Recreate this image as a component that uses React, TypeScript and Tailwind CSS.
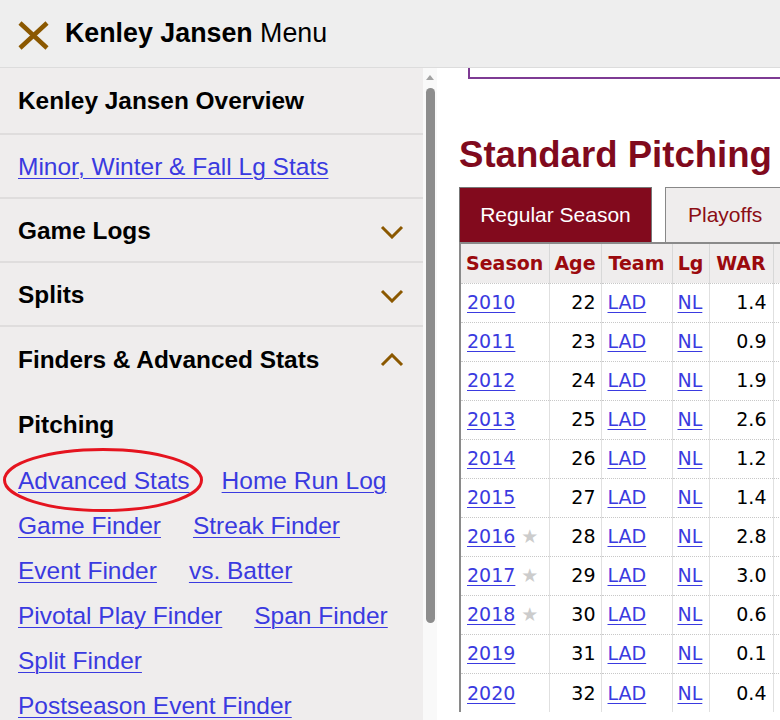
import React from 'react';

const BROWN = '#8b5800';

const Chevron: React.FC<{ up?: boolean }> = ({ up }) => (
  <svg width="24" height="14" viewBox="0 0 24 14" className="shrink-0">
    <path
      d={up ? 'M2 12 L12 2 L22 12' : 'M2 2 L12 12 L22 2'}
      fill="none"
      stroke={BROWN}
      strokeWidth="3"
    />
  </svg>
);

const rows: { year: string; age: number; war: string; star?: boolean }[] = [
  { year: '2010', age: 22, war: '1.4' },
  { year: '2011', age: 23, war: '0.9' },
  { year: '2012', age: 24, war: '1.9' },
  { year: '2013', age: 25, war: '2.6' },
  { year: '2014', age: 26, war: '1.2' },
  { year: '2015', age: 27, war: '1.4' },
  { year: '2016', age: 28, war: '2.8', star: true },
  { year: '2017', age: 29, war: '3.0', star: true },
  { year: '2018', age: 30, war: '0.6', star: true },
  { year: '2019', age: 31, war: '0.1' },
  { year: '2020', age: 32, war: '0.4' },
];

const finderLinks: string[][] = [
  ['Advanced Stats', 'Home Run Log'],
  ['Game Finder', 'Streak Finder'],
  ['Event Finder', 'vs. Batter'],
  ['Pivotal Play Finder', 'Span Finder'],
  ['Split Finder'],
  ['Postseason Event Finder'],
];

const linkCls = 'text-[#3a3ae0] underline underline-offset-[3px] decoration-1';

export default function App() {
  return (
    <div className="w-[780px] h-[720px] overflow-hidden flex flex-col bg-white font-['Liberation_Sans',Arial,sans-serif]">
      {/* header */}
      <div className="h-[68px] shrink-0 bg-[#eeeeee] border-b border-[#dcdcdc] flex items-center pl-[18px]">
        <svg width="31" height="29" viewBox="0 0 31 29" className="mr-[16px] mt-[3px]">
          <path d="M2 2 L29 27 M29 2 L2 27" stroke={BROWN} strokeWidth="4.5" />
        </svg>
        <span className="text-[26.8px] text-black">
          <b>Kenley Jansen</b> Menu
        </span>
      </div>

      <div className="flex flex-1 min-h-0">
        {/* menu */}
        <div className="w-[423px] shrink-0 bg-[#efeded] text-[24.4px] text-black relative">
          <div className="h-[67px] flex items-center px-[18px] pt-[1px] border-b-2 border-[#dfdddd] font-bold">
            Kenley Jansen Overview
          </div>
          <div className="h-[64px] flex items-center px-[18px] pt-[2px] border-b-2 border-[#dfdddd] text-[24.5px]">
            <a className={linkCls}>Minor, Winter &amp; Fall Lg Stats</a>
          </div>
          <div className="h-[64px] flex items-center justify-between pl-[18px] pr-[19px] pt-[3px] border-b-2 border-[#dfdddd] font-bold">
            Game Logs
            <Chevron />
          </div>
          <div className="h-[64px] flex items-center justify-between pl-[18px] pr-[19px] pt-[3px] border-b-2 border-[#dfdddd] font-bold">
            Splits
            <Chevron />
          </div>
          <div className="h-[64px] flex items-center justify-between pl-[18px] pr-[19px] pt-[2px] font-bold">
            Finders &amp; Advanced Stats
            <Chevron up />
          </div>
          <div className="px-[18px] pt-[20px]">
            <div className="font-bold leading-[27px] mb-[29px]">Pitching</div>
            <div className="flex flex-col gap-[17px] leading-[28px] text-[24.5px]">
              {finderLinks.map((line, i) => (
                <div key={i} className="flex gap-[32px] whitespace-nowrap">
                  {line.map((l) => (
                    <a key={l} className={linkCls}>
                      {l}
                    </a>
                  ))}
                </div>
              ))}
            </div>
          </div>
          <svg
            className="absolute left-[2px] top-[379px]"
            width="202"
            height="66"
            viewBox="0 0 202 66"
          >
            <ellipse cx="101" cy="33" rx="98.5" ry="30.5" fill="none" stroke="#e5141f" strokeWidth="3" />
          </svg>
        </div>

        {/* scrollbar */}
        <div className="w-[14px] shrink-0 bg-[#f9f9f9] flex flex-col items-center pt-[7px]">
          <div className="w-0 h-0 border-l-[4px] border-r-[4px] border-b-[5px] border-l-transparent border-r-transparent border-b-[#a3a3a3]" />
          <div className="w-[9px] h-[535px] mt-[8px] rounded-full bg-[#8d8d8d]" />
        </div>

        {/* content */}
        <div className="flex-1 min-w-0 pl-[22px] overflow-hidden">
          <div className="ml-[9px] h-[11px] border-l-2 border-b-2 border-[#7e3b94]" />
          <h2 className="mt-[54px] text-[36.6px] leading-[44px] font-bold text-[#800a1d] whitespace-nowrap">
            Standard Pitching
          </h2>
          <div className="mt-[10px] flex items-end gap-[13px] whitespace-nowrap">
            <div className="w-[193px] shrink-0 h-[55px] bg-[#820a1d] border border-[#777] border-b-0 text-white text-[21px] flex items-center justify-center">
              Regular Season
            </div>
            <div className="w-[140px] shrink-0 h-[55px] bg-[#efeded] border border-[#888] border-b-0 text-[#8c0e14] text-[21px] flex items-center pl-[22px]">
              Playoffs
            </div>
          </div>
          <table className="table-fixed w-[353px] border-collapse border-l-2 border-[#8a8a8a] font-['DejaVu_Sans',Verdana,sans-serif] text-[19px] whitespace-nowrap">
            <thead>
              <tr className="h-[40px] bg-[#efeded] text-[#9b0a0e] border-t-2 border-[#8a8a8a]">
                <th className="w-[89px] text-left pl-[5px] font-bold border-r border-[#d8d8d8]">Season</th>
                <th className="w-[52px] font-bold border-r border-[#d8d8d8]">Age</th>
                <th className="w-[71px] font-bold border-r border-[#d8d8d8]">Team</th>
                <th className="w-[37px] font-bold border-r border-[#d8d8d8]">Lg</th>
                <th className="w-[64px] font-bold border-r border-[#d8d8d8]">WAR</th>
                <th className="w-[40px]"></th>
              </tr>
            </thead>
            <tbody>
              {rows.map((r) => (
                <tr key={r.year} className="h-[39px] border-t border-dotted border-[#c8c8c8]">
                  <td className="pl-[6px] border-r border-[#e0e0e0]">
                    <a className="text-[#3a3ae0] underline underline-offset-[3px]">{r.year}</a>
                    {r.star && <span className="ml-[6px] text-[#cccccc] text-[19px]">★</span>}
                  </td>
                  <td className="text-right pr-[5px] border-r border-[#e0e0e0]">{r.age}</td>
                  <td className="pl-[6px] border-r border-[#e0e0e0]">
                    <a className="text-[#3a3ae0] underline underline-offset-[3px]">LAD</a>
                  </td>
                  <td className="pl-[5px] border-r border-[#e0e0e0]">
                    <a className="text-[#3a3ae0] underline underline-offset-[3px]">NL</a>
                  </td>
                  <td className="text-right pr-[6px] border-r border-[#e0e0e0]">{r.war}</td>
                  <td></td>
                </tr>
              ))}
            </tbody>
          </table>
        </div>
      </div>
    </div>
  );
}
